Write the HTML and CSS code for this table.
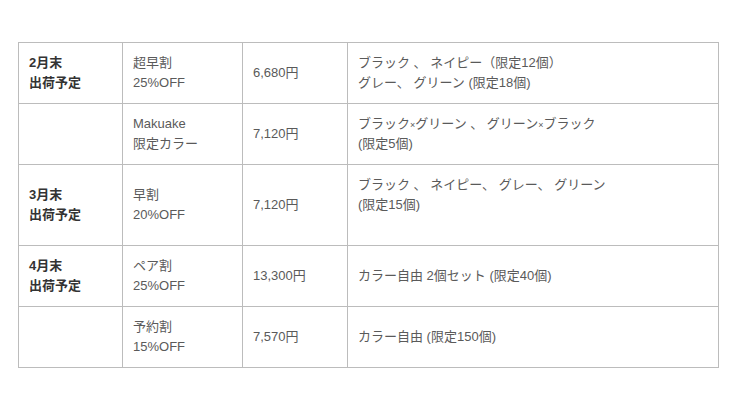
FILE: index.html
```html
<!DOCTYPE html>
<html lang="ja">
<head>
<meta charset="utf-8">
<link rel="stylesheet" href="styles.css">
</head>
<body>
<table class="plan">
  <colgroup>
    <col class="c1"><col class="c2"><col class="c3"><col class="c4">
  </colgroup>
  <tr>
    <th>2月末<br>出荷予定</th>
    <td>超早割<br>25%OFF</td>
    <td>6,680円</td>
    <td>ブラック 、 ネイピー（限定12個）<br>グレー、 グリーン (限定18個)</td>
  </tr>
  <tr>
    <th></th>
    <td>Makuake<br>限定カラー</td>
    <td>7,120円</td>
    <td>ブラック<span class="x">×</span>グリーン 、 グリーン<span class="x">×</span>ブラック<br>(限定5個)</td>
  </tr>
  <tr>
    <th>3月末<br>出荷予定</th>
    <td>早割<br>20%OFF</td>
    <td>7,120円</td>
    <td>ブラック 、 ネイピー、 グレー、 グリーン<br>(限定15個)<br>&nbsp;</td>
  </tr>
  <tr>
    <th>4月末<br>出荷予定</th>
    <td>ペア割<br>25%OFF</td>
    <td>13,300円</td>
    <td>カラー自由 2個セット (限定40個)</td>
  </tr>
  <tr>
    <th></th>
    <td>予約割<br>15%OFF</td>
    <td>7,570円</td>
    <td>カラー自由 (限定150個)</td>
  </tr>
</table>
</body>
</html>
```
FILE: styles.css
```css
html, body {
  margin: 0;
  padding: 0;
  background: #fff;
}
body {
  padding: 42px 0 0 18px;
  font-family: "Liberation Sans", "Noto Sans CJK JP", sans-serif;
  font-size: 13px;
  color: #5a5a5a;
}
.plan {
  border-collapse: collapse;
  table-layout: fixed;
  width: 700px;
}
.c1 { width: 104px; }
.c2 { width: 120px; }
.c3 { width: 105px; }
.c4 { width: 371px; }
.plan th,
.plan td {
  border: 1px solid #bcbcbc;
  padding: 10px 9px 10px 10px;
  line-height: 20px;
  text-align: left;
  vertical-align: middle;
  font-weight: normal;
}
.plan th {
  font-weight: bold;
  color: #333;
}
.x {
  font-size: 9px;
  line-height: 0;
}
```
